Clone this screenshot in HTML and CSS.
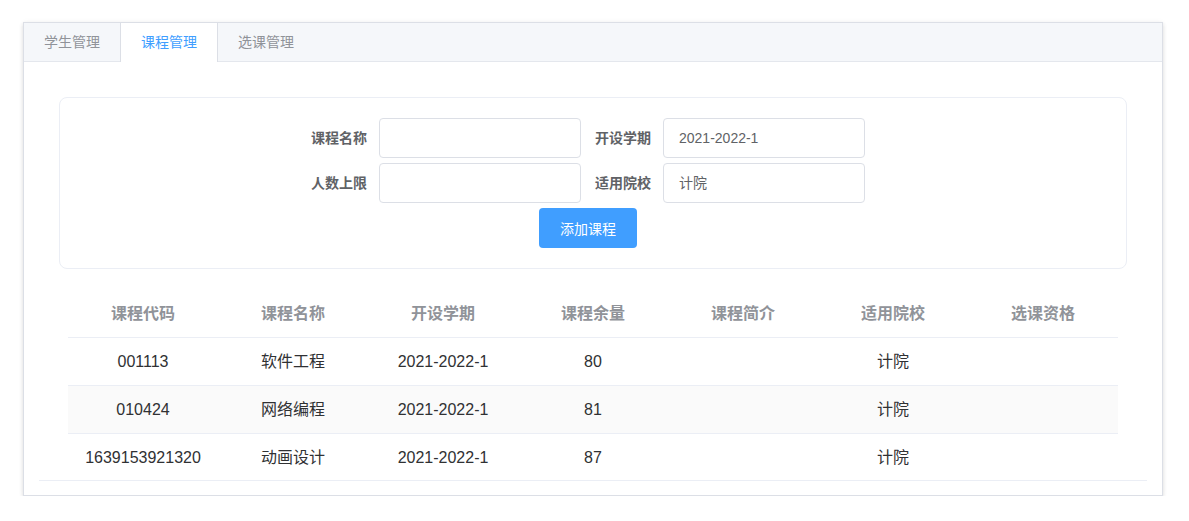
FILE: index.html
```html
<!DOCTYPE html>
<html lang="zh">
<head>
<meta charset="utf-8">
<title>课程管理</title>
<link rel="stylesheet" href="styles.css">
</head>
<body>
<div class="card">
  <div class="tabs">
    <div class="tab">学生管理</div>
    <div class="tab active">课程管理</div>
    <div class="tab">选课管理</div>
  </div>
  <div class="content">
    <div class="form-box">
      <div class="form-grid">
        <label class="label">课程名称</label>
        <div class="input"></div>
        <label class="label">开设学期</label>
        <div class="input">2021-2022-1</div>
        <label class="label">人数上限</label>
        <div class="input"></div>
        <label class="label">适用院校</label>
        <div class="input">计院</div>
        <button class="btn">添加课程</button>
      </div>
    </div>
    <div class="table-wrap">
      <div class="table">
        <div class="row head">
          <div>课程代码</div><div>课程名称</div><div>开设学期</div><div>课程余量</div><div>课程简介</div><div>适用院校</div><div>选课资格</div>
        </div>
        <div class="row">
          <div>001113</div><div>软件工程</div><div>2021-2022-1</div><div>80</div><div></div><div>计院</div><div></div>
        </div>
        <div class="row striped">
          <div>010424</div><div>网络编程</div><div>2021-2022-1</div><div>81</div><div></div><div>计院</div><div></div>
        </div>
        <div class="row last">
          <div>1639153921320</div><div>动画设计</div><div>2021-2022-1</div><div>87</div><div></div><div>计院</div><div></div>
        </div>
      </div>
    </div>
  </div>
</div>
</body>
</html>
```
FILE: styles.css
```css
* { box-sizing: border-box; }
html, body { margin: 0; padding: 0; background: #fff; }
body {
  font-family: "Liberation Sans", "Noto Sans CJK SC", sans-serif;
  padding: 22px 0 0 23px;
}
.card {
  width: 1140px;
  border: 1px solid #dcdfe6;
  background: #fff;
  box-shadow: 0 2px 4px rgba(0,0,0,.12), 0 0 6px rgba(0,0,0,.04);
}
.tabs {
  display: flex;
  height: 39px;
  background: #f5f7fa;
  border-bottom: 1px solid #e4e7ed;
}
.tab {
  height: 38px;
  line-height: 39px;
  padding: 0 20px;
  font-size: 14px;
  color: #909399;
}
.tab.active {
  background: #fff;
  color: #409eff;
  border-left: 1px solid #dcdfe6;
  border-right: 1px solid #dcdfe6;
  height: 39px;
}
.content { padding: 15px 15px 14px; }
.form-box {
  margin: 20px 20px 0;
  border: 1px solid #ebeef5;
  border-radius: 8px;
  padding: 20px 0;
  display: flex;
  justify-content: center;
}
.form-grid {
  display: grid;
  grid-template-columns: 82px 202px 82px 202px;
  row-gap: 5px;
  margin-right: 24px;
}
.label {
  font-size: 14px;
  font-weight: bold;
  color: #606266;
  text-align: right;
  padding-right: 12px;
  line-height: 40px;
}
.input {
  height: 40px;
  border: 1px solid #dcdfe6;
  border-radius: 4px;
  padding: 0 15px;
  font-size: 14px;
  line-height: 38px;
  color: #606266;
}
.btn {
  grid-column: 1 / 5;
  justify-self: center;
  margin-left: 14px;
  width: 98px;
  height: 40px;
  border: none;
  border-radius: 4px;
  background: #409eff;
  color: #fff;
  font-family: inherit;
  font-size: 14px;
  padding: 0;
}
.table-wrap {
  margin-top: 21px;
  border-bottom: 1px solid #ebeef5;
}
.table { width: 1050px; margin: 0 auto; }
.row {
  display: grid;
  grid-template-columns: repeat(7, 150px);
  height: 48px;
  border-bottom: 1px solid #ebeef5;
  font-size: 16px;
  color: #303133;
}
.row > div {
  text-align: center;
  line-height: 47px;
}
.row.head { color: #909399; font-weight: bold; }
.row.striped { background: #fafafa; }
.row.last { border-bottom: none; height: 46px; }
```
